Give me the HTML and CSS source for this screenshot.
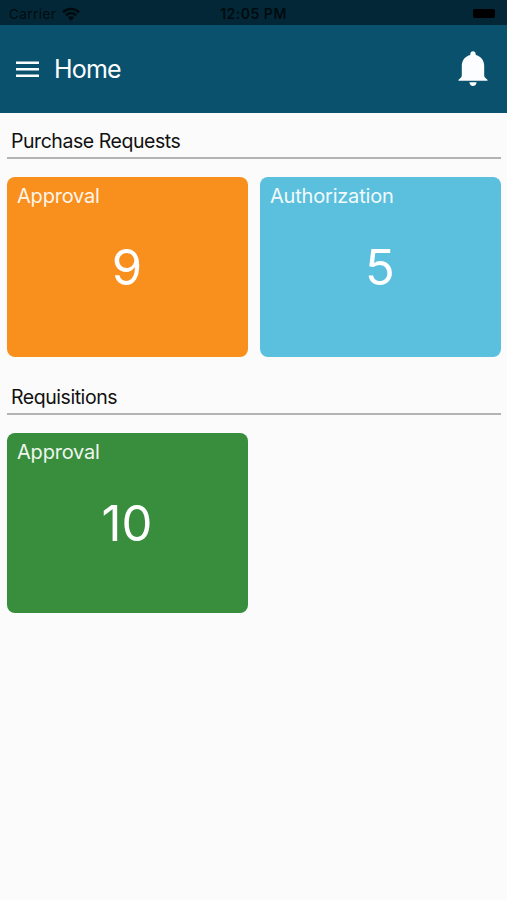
FILE: index.html
```html
<!DOCTYPE html>
<html lang="en">
<head>
<meta charset="utf-8">
<title>Home</title>
<link rel="stylesheet" href="styles.css">
</head>
<body>
<div class="status">
  <div class="carrier"><span>Carrier</span>
    <svg class="wifi" viewBox="0 0 18 14"><path d="M1 5.200a11.500 11.500 0 0 1 16 0M3.800 8.300a7.500 7.500 0 0 1 10.400 0" fill="none" stroke="currentColor" stroke-width="2.600"/><path d="M5.800 10.500a4.600 4.600 0 0 1 6.400 0L9 13.800z" fill="currentColor"/></svg>
  </div>
  <time class="time">12:05 PM</time>
  <div class="battery"></div>
</div>
<header class="bar">
  <svg class="menu" viewBox="0 0 23 17"><path d="M0 1.800h23M0 8.300h23M0 14.800h23" stroke="currentColor" stroke-width="2.500"/></svg>
  <h1 class="title">Home</h1>
  <svg class="bell" viewBox="0 0 30 36"><path d="M15 .3c1.600 0 2.700 1.200 2.700 2.700v.9c5.100 1.200 8.500 5.500 8.500 10.800v9.300c0 1.800.7 2.800 2.400 3.900.8.500 1 1 1 1.900H.4c0-.9.200-1.400 1-1.900 1.700-1.100 2.400-2.100 2.400-3.900v-9.300c0-5.300 3.400-9.600 8.500-10.800V3c0-1.500 1.100-2.700 2.700-2.700zM11.400 31.300h7.200c-.2 2.300-1.600 3.700-3.600 3.700s-3.400-1.400-3.600-3.700z" fill="currentColor"/></svg>
</header>
<main>
  <section class="group">
    <h2 class="heading">Purchase Requests</h2>
    <div class="cards">
      <div class="card orange"><div class="label">Approval</div><div class="count">9</div></div>
      <div class="card blue"><div class="label">Authorization</div><div class="count">5</div></div>
    </div>
  </section>
  <section class="group">
    <h2 class="heading">Requisitions</h2>
    <div class="cards">
      <div class="card green"><div class="label">Approval</div><div class="count">10</div></div>
    </div>
  </section>
</main>
</body>
</html>
```
FILE: styles.css
```css
* { box-sizing: border-box; }
body {
  margin: 0;
  min-height: 900px;
  background: #fbfbfb;
  color: #111;
  font-family: Inter, "Liberation Sans", sans-serif;
}
.status {
  height: 25px;
  padding: 2px 9px 0;
  display: grid;
  grid-template-columns: 1fr auto 1fr;
  align-items: center;
  background: #032736;
  color: #000b10;
  font-size: 13.5px;
}
.carrier { display: flex; align-items: center; gap: 6px; letter-spacing: .45px; }
.wifi { width: 18px; height: 14px; }
.time { font-size: 14px; font-weight: 600; letter-spacing: .5px; }
.battery {
  justify-self: end;
  width: 22px;
  height: 9px;
  margin-right: 3px;
  border-radius: 2px;
  background: #000;
}
.bar {
  height: 88px;
  padding: 0 19px 0 16px;
  display: flex;
  align-items: center;
  background: #0a516d;
  color: #fbfdfe;
}
.menu { width: 23px; height: 17px; }
.title {
  margin: 0 auto 0 15px;
  font-size: 25px;
  font-weight: 400;
  line-height: 30px;
  letter-spacing: -.8px;
}
.bell { width: 30px; height: 36px; }
.group { padding: 0 6px 0 7px; height: 256px; }
.heading {
  height: 46px;
  margin: 0 0 18px;
  padding: 16px 4px 0;
  border-bottom: 2px solid #b4b4b4;
  font-size: 19.5px;
  font-weight: 400;
  line-height: 24px;
  letter-spacing: -.45px;
}
.cards { display: grid; grid-template-columns: 1fr 1fr; gap: 12px; }
.card {
  height: 179.5px;
  padding: 7px 10px;
  border-radius: 8px;
  color: #fff;
}
.orange { background: #f98f1d; }
.blue { background: #5bc0de; }
.green { background: #388e3c; }
.label { font-size: 20px; line-height: 24px; letter-spacing: -.2px; opacity: .92; }
.count {
  margin-top: 30px;
  padding-right: 1px;
  font-size: 49px;
  font-weight: 400;
  line-height: 60px;
  text-align: center;
}
```
